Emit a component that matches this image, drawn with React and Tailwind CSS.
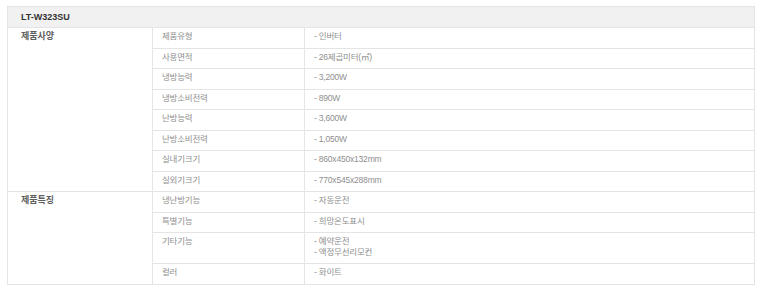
const specs = [
  {
    group: '제품사양',
    rows: [
      ['제품유형', ['- 인버터']],
      ['사용면적', ['- 26제곱미터(㎡)']],
      ['냉방능력', ['- 3,200W']],
      ['냉방소비전력', ['- 890W']],
      ['난방능력', ['- 3,600W']],
      ['난방소비전력', ['- 1,050W']],
      ['실내기크기', ['- 860x450x132mm']],
      ['실외기크기', ['- 770x545x288mm']],
    ],
  },
  {
    group: '제품특징',
    rows: [
      ['냉난방기능', ['- 자동운전']],
      ['특별기능', ['- 희망온도표시']],
      ['기타기능', ['- 예약운전', '- 액정무선리모컨']],
      ['컬러', ['- 화이트']],
    ],
  },
];

const cell = 'border border-[#e4e4e4] align-top pt-[3px] pb-[6px] leading-[10.5px]';

export default function App() {
  return (
    <div className="w-[760px] h-[293px] bg-white pt-[6px] pl-[7px] font-['Liberation_Sans','Noto_Sans_CJK_KR',sans-serif]">
      <table className="w-[748px] table-fixed border-collapse text-[8.5px] tracking-[-0.2px] text-[#8f8f8f]">
        <colgroup>
          <col className="w-[145px]" />
          <col className="w-[152px]" />
          <col />
        </colgroup>
        <thead>
          <tr>
            <th
              colSpan={3}
              className="h-[21px] border border-[#e4e4e4] bg-[#f1f1f1] pl-[13px] text-left text-[9px] font-bold text-[#333] leading-[12px] tracking-normal"
            >
              LT-W323SU
            </th>
          </tr>
        </thead>
        <tbody>
          {specs.map((g) =>
            g.rows.map(([label, values], i) => (
              <tr key={g.group + label}>
                {i === 0 && (
                  <td
                    rowSpan={g.rows.length}
                    className={`${cell} pl-[13px] text-[9px] font-bold text-[#5e5e5e] tracking-normal`}
                  >
                    {g.group}
                  </td>
                )}
                <td className={`${cell} pl-[9px]`}>{label}</td>
                <td className={`${cell} pl-[9px]`}>
                  {values.map((v) => (
                    <div key={v}>{v}</div>
                  ))}
                </td>
              </tr>
            ))
          )}
        </tbody>
      </table>
    </div>
  );
}
